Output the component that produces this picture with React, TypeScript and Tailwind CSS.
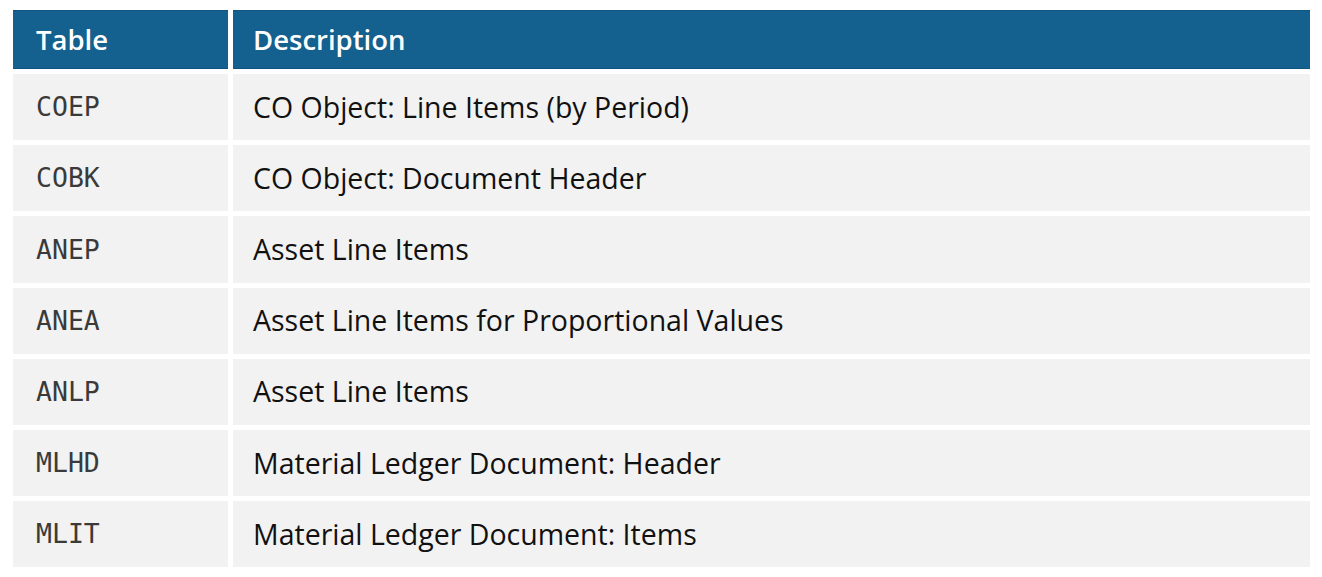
const rows = [
  { table: 'COEP', description: 'CO Object: Line Items (by Period)' },
  { table: 'COBK', description: 'CO Object: Document Header' },
  { table: 'ANEP', description: 'Asset Line Items' },
  { table: 'ANEA', description: 'Asset Line Items for Proportional Values' },
  { table: 'ANLP', description: 'Asset Line Items' },
  { table: 'MLHD', description: 'Material Ledger Document: Header' },
  { table: 'MLIT', description: 'Material Ledger Document: Items' },
]

export default function App() {
  return (
    <div className="w-[1322px] h-[577px] bg-white pt-[10px] pl-[13px] font-['Open_Sans',sans-serif]">
      <div className="w-[1297px] grid grid-cols-[215px_1fr] gap-x-[5px] gap-y-[5px] auto-rows-[66.2px] grid-rows-[59px]">
        <div className="bg-[#14608f] border-y border-[#0f5580] flex items-center pl-[23px] text-white text-[27.5px] font-semibold">
          Table
        </div>
        <div className="bg-[#14608f] border-y border-[#0f5580] flex items-center pl-[20px] text-white text-[27.5px] font-semibold">
          Description
        </div>
        {rows.map((row) => (
          <>
            <div key={row.table + '-t'} className="bg-[#f2f2f2] flex items-center pl-[23px] text-[#3a3a3a] text-[26.5px] font-['DejaVu_Sans_Mono',monospace] font-light">
              {row.table}
            </div>
            <div key={row.table + '-d'} className="bg-[#f2f2f2] flex items-center pl-[20px] text-[#111] text-[28.5px]">
              {row.description}
            </div>
          </>
        ))}
      </div>
    </div>
  )
}
